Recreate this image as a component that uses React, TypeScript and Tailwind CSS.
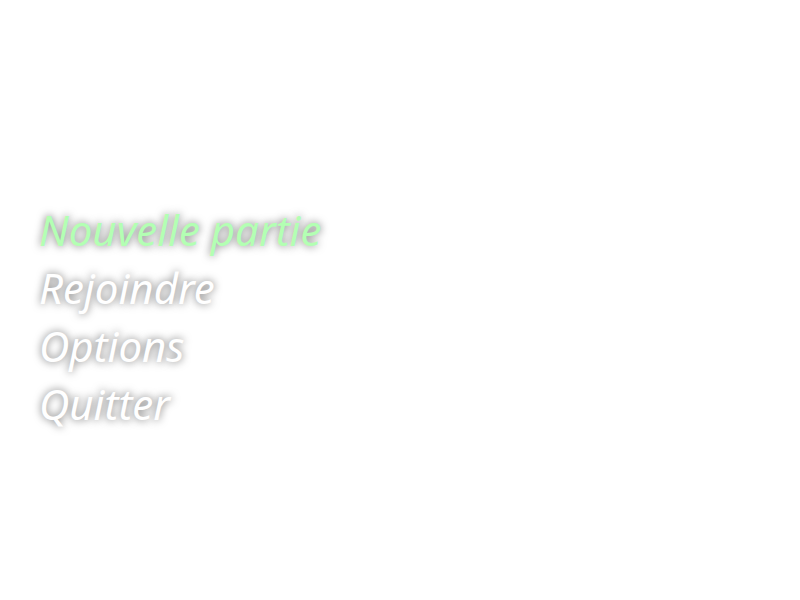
const items = ['Nouvelle partie', 'Rejoindre', 'Options', 'Quitter'];

export default function App() {
  return (
    <main className="flex min-h-screen items-center bg-white px-[39px] py-8 font-['Noto_Sans','Open_Sans',sans-serif]">
      <nav aria-label="Menu" className="mt-[34px] flex flex-col items-start">
        {items.map((item, index) => (
          <button
            key={item}
            type="button"
            className={`h-[58px] text-[42px] leading-[58px] font-normal whitespace-nowrap italic [text-shadow:0_0_8px_rgba(0,0,0,0.6)] ${
              index === 0 ? 'text-[#b3ffb3]' : 'text-white'
            }`}
          >
            {item}
          </button>
        ))}
      </nav>
    </main>
  );
}
